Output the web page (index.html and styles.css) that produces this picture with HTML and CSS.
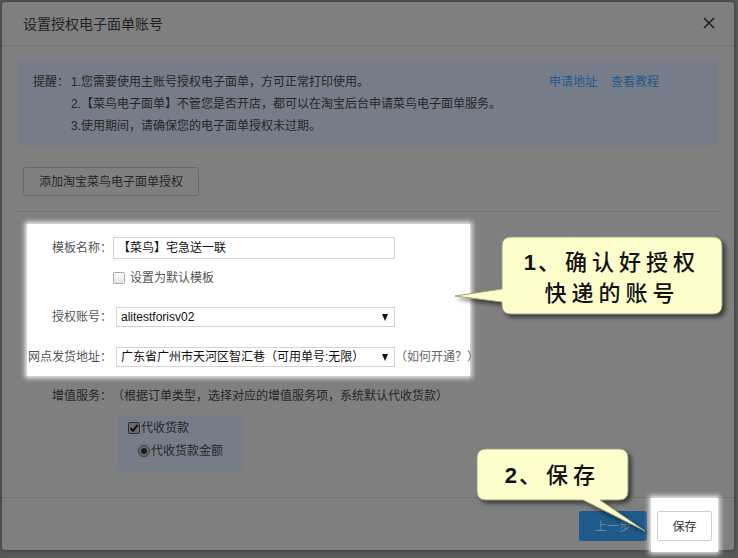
FILE: index.html
```html
<!DOCTYPE html>
<html lang="zh-CN">
<head>
<meta charset="utf-8">
<title>设置授权电子面单账号</title>
<link rel="stylesheet" href="styles.css">
</head>
<body>
<div class="modal">
  <div class="modal-header">
    <span class="title">设置授权电子面单账号</span>
    <span class="close"><svg width="12" height="12" viewBox="0 0 12 12"><path d="M1 1L11 11M11 1L1 11" stroke="#1e1e1e" stroke-width="1.6" fill="none"/></svg></span>
  </div>
  <div class="modal-body">
    <div class="notice">
      <div class="notice-label">提醒：</div>
      <div class="notice-lines">
        <div class="notice-line first"><span>1.您需要使用主账号授权电子面单，方可正常打印使用。</span><span class="links"><a class="link">申请地址</a><a class="link">查看教程</a></span></div>
        <div class="notice-line">2.【菜鸟电子面单】不管您是否开店，都可以在淘宝后台申请菜鸟电子面单服务。</div>
        <div class="notice-line">3.使用期间，请确保您的电子面单授权未过期。</div>
      </div>
    </div>
    <button class="btn-add">添加淘宝菜鸟电子面单授权</button>
    <div class="divider"></div>
    <div class="spot spot-form">
      <div class="row row-name"><label class="lbl">模板名称：</label><div class="input">【菜鸟】宅急送一联</div></div>
      <div class="row row-check"><span class="cb"></span><span class="cb-text">设置为默认模板</span></div>
      <div class="row row-sel"><label class="lbl">授权账号：</label><div class="select"><span>alitestforisv02</span><span class="arrow"></span></div></div>
      <div class="row row-sel2"><label class="lbl">网点发货地址：</label><div class="select"><span>广东省广州市天河区智汇巷（可用单号:无限）</span><span class="arrow"></span></div><span class="hint">（如何开通？）</span></div>
    </div>
    <div class="row row-service"><span class="lbl">增值服务：</span><span class="svc-text">（根据订单类型，选择对应的增值服务项，系统默认代收货款）</span></div>
    <div class="service-box">
      <div class="svc-row"><span class="cb-dim"><svg width="10" height="10" viewBox="0 0 10 10"><path d="M1.5 5.2L4 7.8L8.8 1.8" stroke="#111" stroke-width="2" fill="none"/></svg></span><span>代收货款</span></div>
      <div class="svc-row sub"><span class="radio-dim"><span class="dot"></span></span><span>代收货款金额</span></div>
    </div>
  </div>
  <div class="modal-footer">
    <button class="btn-prev">上一步</button>
    <div class="spot spot-save"><button class="btn-save">保存</button></div>
  </div>
</div>

<div class="callout callout-1">
  <svg class="bubble" width="280" height="92" viewBox="0 0 280 92"><path d="M61 7H263Q272 7 272 16V75Q272 84 263 84H61Q52 84 52 75V72L5 66L52 59V16Q52 7 61 7Z" fill="#fefecd" stroke="#a3a383" stroke-width="1"/></svg>
  <div class="callout-text text-1"><div><b>1</b>、确认好授权</div><div>快递的账号</div></div>
</div>
<div class="callout callout-2">
  <svg class="bubble" width="190" height="100" viewBox="0 0 190 100"><path d="M16 9H149Q158 9 158 18V51Q158 60 149 60H130L175 91L113 60H16Q7 60 7 51V18Q7 9 16 9Z" fill="#fefecd" stroke="#a3a383" stroke-width="1"/></svg>
  <div class="callout-text text-2"><div><b>2</b>、保存</div></div>
</div>
</body>
</html>
```

FILE: styles.css
```css
* { box-sizing: border-box; }
html, body { margin: 0; padding: 0; }
body {
  width: 738px;
  height: 558px;
  background: #595959;
  padding: 2px 4px 0 2px;
  font-family: "Liberation Sans", "Noto Sans CJK SC", sans-serif;
  font-size: 12px;
  line-height: 16px;
  overflow: hidden;
  position: relative;
}
.modal {
  width: 732px;
  height: 548px;
  background: #7f7f7f;
  border-radius: 3px;
  box-shadow: 0 0 4px rgba(0,0,0,0.45);
  display: flex;
  flex-direction: column;
}
.modal-header {
  height: 44px;
  border-bottom: 1px solid #737373;
  display: flex;
  align-items: center;
  padding: 0 19px 2px 21px;
  flex: none;
}
.title {
  font-family: "Noto Sans CJK SC", sans-serif;
  font-size: 14px;
  color: #232323;
}
.close { margin-left: auto; display: flex; }
.modal-body {
  flex: 1;
  padding: 15px 16px 0 16px;
}
.notice {
  background: #767d88;
  height: 85px;
  padding: 10px 59px 9px 15px;
  display: flex;
  color: #262626;
  line-height: 22px;
}
.notice-label { width: 38px; flex: none; }
.notice-lines { flex: 1; }
.notice-line { display: flex; white-space: nowrap; }
.links { margin-left: auto; display: flex; gap: 14px; }
.link { color: #1e5a8d; }
.btn-add {
  display: block;
  margin: 21px 0 0 5px;
  height: 29px;
  padding: 0 15px;
  border: 1px solid #686868;
  border-radius: 3px;
  background: #7f7f7f;
  color: #262626;
  font: 12px/16px "Liberation Sans", "Noto Sans CJK SC", sans-serif;
}
.divider {
  margin-top: 15px;
  height: 1px;
  background: #717171;
}
.spot {
  background: #fff;
  box-shadow: 0 0 5px 2px rgba(255,255,255,0.92);
}
.spot-form {
  margin: 12px 0 0 9px;
  width: 443px;
  height: 152px;
  padding-top: 13px;
}
.row { display: flex; align-items: center; white-space: nowrap; }
.lbl {
  width: 85px;
  flex: none;
  text-align: right;
  color: #555;
}
.row-name { height: 22px; }
.input {
  flex: none;
  margin-left: 1px;
  width: 282px;
  height: 22px;
  border: 1px solid #d4d4d4;
  padding: 0 4px;
  display: flex;
  align-items: center;
  color: #111;
}
.row-check { height: 14px; margin-top: 12px; padding-left: 86px; }
.cb {
  width: 12px;
  height: 12px;
  border: 1px solid #a8a8a8;
  border-radius: 2px;
  background: linear-gradient(#fdfdfd, #e6e6e6);
  flex: none;
}
.cb-text { margin-left: 5px; color: #555; }
.row-sel { height: 20px; margin-top: 22px; }
.row-sel2 { height: 20px; margin-top: 20px; }
.select {
  flex: none;
  margin-left: 4px;
  width: 279px;
  height: 20px;
  border: 1px solid #d4d4d4;
  padding: 0 6px 0 4px;
  display: flex;
  align-items: center;
  color: #111;
}
.arrow {
  flex: none;
  margin-left: auto;
  width: 0;
  height: 0;
  border-left: 3.5px solid transparent;
  border-right: 3.5px solid transparent;
  border-top: 7px solid #111;
}
.hint { color: #666; flex: none; }
.row-service { margin: 12px 0 0 9px; height: 16px; color: #262626; }
.row-service .lbl { color: #262626; }
.svc-text { color: #262626; }
.service-box {
  margin: 11px 0 0 100px;
  width: 125px;
  height: 56px;
  background: #767d88;
  padding: 3px 0 0 10px;
  color: #262626;
}
.svc-row { display: flex; align-items: center; height: 20px; }
.svc-row.sub { margin-top: 3px; padding-left: 10px; }
.cb-dim {
  width: 12px;
  height: 12px;
  border: 1px solid #2e2e2e;
  border-radius: 2px;
  background: #6c6c6c;
  display: flex;
  align-items: center;
  justify-content: center;
  margin-right: 1px;
}
.radio-dim {
  width: 12px;
  height: 12px;
  border: 1px solid #3a3a3a;
  border-radius: 50%;
  background: #6e6e6e;
  display: flex;
  align-items: center;
  justify-content: center;
  margin-right: 1px;
}
.dot { width: 6px; height: 6px; border-radius: 50%; background: #1c1c1c; }
.modal-footer {
  flex: none;
  height: 53px;
  border-top: 1px solid #737373;
  display: flex;
  justify-content: flex-end;
  align-items: flex-start;
  padding-right: 16px;
}
.btn-prev {
  margin-top: 13px;
  margin-right: 4px;
  width: 68px;
  height: 30px;
  border: none;
  border-radius: 2px;
  background: #1f5a8a;
  color: #6487a8;
  font: 12px/16px "Noto Sans CJK SC", sans-serif;
}
.spot-save {
  height: 54px;
  padding: 13px 6px 0 6px;
}
.btn-save {
  width: 55px;
  height: 30px;
  border: 1px solid #cfcfcf;
  border-radius: 2px;
  background: #fff;
  color: #333;
  font: 12px/16px "Noto Sans CJK SC", sans-serif;
}
.callout { position: absolute; }
.bubble { display: block; filter: drop-shadow(3px 3px 2px rgba(0,0,0,0.55)); }
.callout-1 { left: 450px; top: 230px; width: 280px; height: 92px; }
.callout-2 { left: 470px; top: 440px; width: 190px; height: 100px; }
.callout-text {
  position: absolute;
  text-align: center;
  font-family: "Noto Sans CJK SC", sans-serif;
  font-weight: 500;
  font-size: 22px;
  line-height: 28px;
  letter-spacing: 5px;
  color: #111;
}
.callout-text b { font-family: "Liberation Sans", sans-serif; font-weight: bold; letter-spacing: 2px; }
.text-1 { left: 52px; top: 16px; width: 220px; }
.text-2 { left: 7px; top: 19px; width: 151px; }
```
